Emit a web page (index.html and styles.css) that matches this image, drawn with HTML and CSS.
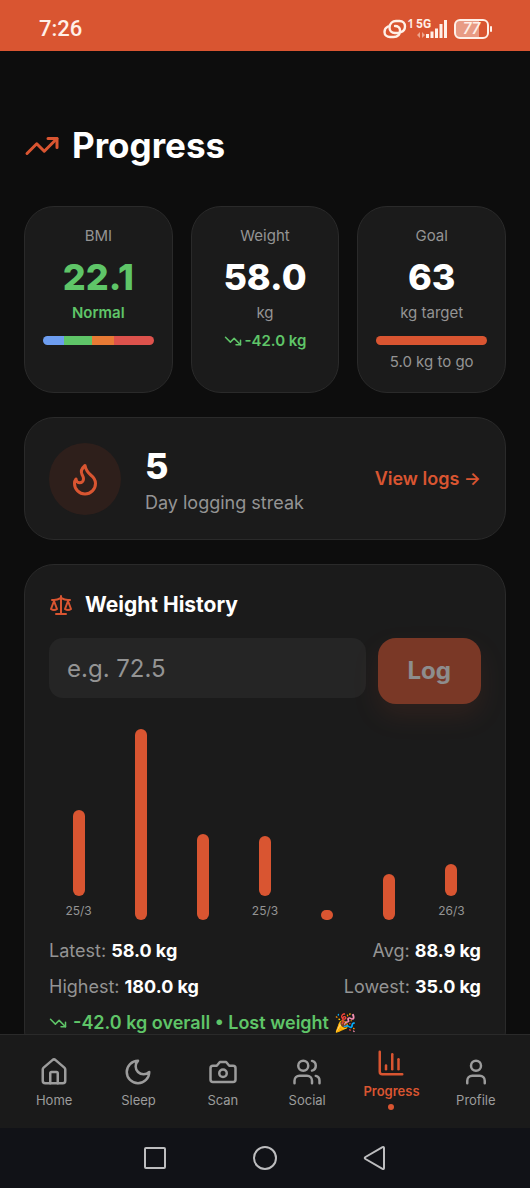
FILE: index.html
```html
<!DOCTYPE html>
<html lang="en">
<head>
<meta charset="utf-8">
<meta name="viewport" content="width=device-width, initial-scale=1">
<title>Progress</title>
<link rel="stylesheet" href="styles.css">
</head>
<body>
<div class="app">
  <header class="status">
    <time class="clock">7:26</time>
    <div class="status-icons">
      <svg class="status-link" viewBox="0 0 24 22" fill="none" stroke="#fff0e8" stroke-width="2.400" stroke-linecap="round">
        <path d="M15.500 15H12C8.500 15 6.500 12.500 6.500 9.500C6.500 5.500 9.500 3 13 3h3.500C20 3 22 5.500 22 8.200c0 3-1.500 5-4 5.800"/>
        <path d="M5 8.500C2.800 9.500 1.500 11.500 1.500 14c0 3 2.500 5 5.500 5h3.500c4 0 6.500-2.500 6.500-6.500C17 9.500 15 8 12 8"/>
      </svg>
      <span class="status-one">1</span>
      <span class="signal">
        <span class="signal-label">5G</span>
        <svg class="signal-bars" viewBox="0 0 32 20">
          <path d="M4 13l-3 3 3 3zM6 13l3 3-3 3z" fill="#eda48c"/>
          <path d="M10 15h3v4h-3zM14.500 12.500h3v6.500h-3zM19 9.500h3v9.500h-3zM23.500 5h3v14h-3zM28 1h3v18h-3z" fill="#fff0e8"/>
        </svg>
      </span>
      <span class="battery"><span class="battery-level">77</span></span>
    </div>
  </header>

  <main class="page">
    <div class="heading">
      <svg class="icon icon-xl" viewBox="0 0 24 24"><path d="M22 7 13.500 15.500 8.500 10.500 2 17"/><path d="M16 7h6v6"/></svg>
      <h1>Progress</h1>
    </div>

    <section class="tiles">
      <article class="card tile">
        <p class="muted">BMI</p>
        <p class="figure good">22.1</p>
        <p class="good strong">Normal</p>
        <div class="meter"><i class="under"></i><i class="normal"></i><i class="over"></i><i class="obese"></i></div>
      </article>
      <article class="card tile">
        <p class="muted">Weight</p>
        <p class="figure">58.0</p>
        <p class="muted">kg</p>
        <p class="good strong change"><svg class="icon icon-sm" viewBox="0 0 24 24"><path d="M22 17 13.500 8.500 8.500 13.500 2 7"/><path d="M16 17h6v-6"/></svg>-42.0 kg</p>
      </article>
      <article class="card tile">
        <p class="muted">Goal</p>
        <p class="figure">63</p>
        <p class="muted">kg target</p>
        <div class="meter"><i class="goal"></i></div>
        <p class="muted to-go">5.0 kg to go</p>
      </article>
    </section>

    <section class="card streak">
      <div class="flame"><svg class="icon icon-xl" viewBox="0 0 24 24"><path d="M8.500 14.500A2.500 2.500 0 0 0 11 12c0-1.380-.5-2-1-3-1.072-2.143-.224-4.054 2-6 .5 2.500 2 4.900 4 6.500 2 1.600 3 3.500 3 5.500a7 7 0 1 1-14 0c0-1.153.433-2.294 1-3a2.500 2.500 0 0 0 2.500 2.500z"/></svg></div>
      <div class="streak-text">
        <p class="figure">5</p>
        <p class="muted">Day logging streak</p>
      </div>
      <a class="logs" href="#logs">View logs →</a>
    </section>

    <section class="card history">
      <h2><svg class="icon icon-md" viewBox="0 0 24 24"><path d="m16 16 3-8 3 8c-.870.650-1.920 1-3 1s-2.130-.350-3-1Z"/><path d="m2 16 3-8 3 8c-.870.650-1.920 1-3 1s-2.130-.350-3-1Z"/><path d="M7 21h10"/><path d="M12 3v18"/><path d="M3 7h2c2 0 5-1 7-2 2 1 5 2 7 2h2"/></svg>Weight History</h2>
      <form class="entry">
        <input type="text" inputmode="decimal" placeholder="e.g. 72.5" aria-label="Weight in kg">
        <button type="submit" disabled>Log</button>
      </form>
      <div class="chart">
        <div class="column"><i class="bar" style="height:86px"></i><span>25/3</span></div>
        <div class="column"><i class="bar" style="height:191px"></i></div>
        <div class="column"><i class="bar" style="height:86px"></i></div>
        <div class="column"><i class="bar" style="height:60px"></i><span>25/3</span></div>
        <div class="column"><i class="bar" style="height:10px"></i></div>
        <div class="column"><i class="bar" style="height:46px"></i></div>
        <div class="column"><i class="bar" style="height:32px"></i><span>26/3</span></div>
      </div>
      <div class="summary">
        <p>Latest: <b>58.0 kg</b></p><p>Avg: <b>88.9 kg</b></p>
        <p>Highest: <b>180.0 kg</b></p><p>Lowest: <b>35.0 kg</b></p>
      </div>
      <p class="overall"><svg class="icon icon-sm" viewBox="0 0 24 24"><path d="M22 17 13.500 8.500 8.500 13.500 2 7"/><path d="M16 17h6v-6"/></svg>-42.0 kg overall • Lost weight 🎉</p>
    </section>
  </main>

  <nav class="tabs">
    <a href="#home"><svg class="icon icon-lg" viewBox="0 0 24 24"><path d="M15 21v-8a1 1 0 0 0-1-1h-4a1 1 0 0 0-1 1v8"/><path d="M3 10a2 2 0 0 1 .709-1.528l7-5.999a2 2 0 0 1 2.582 0l7 5.999A2 2 0 0 1 21 10v9a2 2 0 0 1-2 2H5a2 2 0 0 1-2-2z"/></svg>Home</a>
    <a href="#sleep"><svg class="icon icon-lg" viewBox="0 0 24 24"><path d="M12 3a6 6 0 0 0 9 9 9 9 0 1 1-9-9Z"/></svg>Sleep</a>
    <a href="#scan"><svg class="icon icon-lg" viewBox="0 0 24 24"><path d="M14.500 4h-5L7 7H4a2 2 0 0 0-2 2v9a2 2 0 0 0 2 2h16a2 2 0 0 0 2-2V9a2 2 0 0 0-2-2h-3l-2.500-3z"/><circle cx="12" cy="13" r="3"/></svg>Scan</a>
    <a href="#social"><svg class="icon icon-lg" viewBox="0 0 24 24"><path d="M16 21v-2a4 4 0 0 0-4-4H6a4 4 0 0 0-4 4v2"/><circle cx="9" cy="7" r="4"/><path d="M22 21v-2a4 4 0 0 0-3-3.870"/><path d="M16 3.130a4 4 0 0 1 0 7.750"/></svg>Social</a>
    <a href="#progress" class="active" aria-current="page"><svg class="icon icon-lg" viewBox="0 0 24 24"><path d="M3 3v16a2 2 0 0 0 2 2h16"/><path d="M18 17V9"/><path d="M13 17V5"/><path d="M8 17v-3"/></svg>Progress<i class="dot"></i></a>
    <a href="#profile"><svg class="icon icon-lg" viewBox="0 0 24 24"><path d="M19 21v-2a4 4 0 0 0-4-4H9a4 4 0 0 0-4 4v2"/><circle cx="12" cy="7" r="4"/></svg>Profile</a>
  </nav>

  <div class="system">
    <button type="button" aria-label="Recent apps"><svg viewBox="0 0 26 26"><rect x="3" y="3" width="20" height="20" rx="1"/></svg></button>
    <button type="button" aria-label="Home screen"><svg viewBox="0 0 26 26"><circle cx="13" cy="13" r="11"/></svg></button>
    <button type="button" aria-label="Back"><svg viewBox="0 0 26 26"><path d="M22 3v20q0 1.500-1.500.8L3.500 14q-1.500-1 0-2L20.500 2.200Q22 1.500 22 3z"/></svg></button>
  </div>
</div>
</body>
</html>
```
FILE: styles.css
```css
:root {
  --bg: #0d0d0d;
  --card: #1b1b1b;
  --line: #2a2a2a;
  --muted: #949494;
  --accent: #d95531;
  --good: #5fc568;
}

* { box-sizing: border-box; margin: 0; }

body {
  background: var(--bg);
  color: #fff;
  font: 15px/24px Inter, "Noto Sans", sans-serif;
}

a { text-decoration: none; }

.app {
  display: flex;
  flex-direction: column;
  height: 100vh;
}

/* Status bar */
.status {
  display: flex;
  align-items: center;
  justify-content: space-between;
  height: 51px;
  padding: 7px 38px 0 39px;
  background: var(--accent);
  color: #fff0e8;
}
.clock { font: 500 22px/24px Roboto, sans-serif; }
.status-icons { display: flex; align-items: center; }
.status-link { width: 24px; height: 22px; }
.status-one { font: 600 12px/12px "Noto Sans", sans-serif; align-self: flex-start; }
.signal { position: relative; display: flex; margin-left: 2px; }
.signal-bars { width: 32px; height: 20px; }
.signal-label {
  position: absolute;
  top: -1px;
  left: 0;
  font: 700 12px/12px Roboto, sans-serif;
}
.battery { display: flex; align-items: center; margin-left: 6px; }
.battery-level {
  width: 35px;
  border: 2px solid #fff0e8;
  border-radius: 6px;
  background: linear-gradient(90deg, #e89b84 74%, transparent 74%);
  font: italic 500 16px/16px Roboto, sans-serif;
  text-align: center;
}
.battery::after {
  content: "";
  width: 2px;
  height: 6px;
  margin-left: 1px;
  border-radius: 1px;
  background: #fff0e8;
}

/* Icons */
.icon {
  flex: none;
  fill: none;
  stroke: currentColor;
  stroke-width: 2;
  stroke-linecap: round;
  stroke-linejoin: round;
}
.icon-sm { width: 18px; height: 18px; }
.icon-md { width: 24px; height: 24px; }
.icon-lg { width: 30px; height: 30px; }
.icon-xl { width: 36px; height: 36px; }

/* Page */
.page {
  flex: 1;
  min-height: 0;
  overflow: hidden;
  padding: 72px 24px 0;
}
.heading {
  display: flex;
  align-items: center;
  gap: 12px;
  margin-bottom: 38px;
  color: var(--accent);
}
h1 { color: #fff; font-size: 35px; line-height: 45px; font-weight: 700; }

.card {
  border: 1px solid var(--line);
  border-radius: 30px;
  background: var(--card);
}
.muted { color: var(--muted); }
.good { color: var(--good); }
.strong { font-weight: 600; }
.figure { font-size: 36px; line-height: 45px; font-weight: 800; }

.tiles {
  display: grid;
  grid-template-columns: repeat(3, 1fr);
  gap: 18px;
}
.tile { padding: 17px 18px 18px; text-align: center; }
.tile .figure { margin: 7px 0 1px; }
.change {
  display: flex;
  align-items: center;
  justify-content: center;
  gap: 3px;
  margin-top: 4px;
}
.meter {
  display: flex;
  height: 9px;
  margin-top: 11px;
  border-radius: 5px;
  overflow: hidden;
}
.under { flex: 19; background: #6d9df0; }
.normal { flex: 25; background: var(--good); }
.over { flex: 20; background: #e87a35; }
.obese { flex: 36; background: #dd524c; }
.goal { flex: 1; background: var(--accent); }
.to-go { margin-top: 5px; }

.streak {
  display: flex;
  align-items: center;
  gap: 24px;
  margin-top: 24px;
  padding: 24px;
  font-size: 18px;
  line-height: 25px;
}
.streak .figure { line-height: 48px; }
.flame {
  display: grid;
  place-items: center;
  width: 72px;
  height: 72px;
  border-radius: 50%;
  background: #2e1f1b;
  color: var(--accent);
}
.logs { margin-left: auto; color: var(--accent); font-weight: 600; }

.history { margin-top: 24px; padding: 24px; }
h2 {
  display: flex;
  align-items: center;
  gap: 12px;
  font-size: 21px;
  line-height: 31px;
  font-weight: 700;
}
h2 .icon { color: var(--accent); }
.entry { display: flex; align-items: flex-start; gap: 12px; margin-top: 18px; }
.entry input {
  flex: 1;
  min-width: 0;
  height: 60px;
  padding: 0 18px;
  border: 0;
  border-radius: 14px;
  background: #252525;
  color: #fff;
  font: 24px/30px Inter, sans-serif;
}
.entry input::placeholder { color: #949494; opacity: 1; }
.entry button {
  height: 66px;
  padding: 0 30px;
  border: 0;
  border-radius: 18px;
  background: var(--accent);
  box-shadow: 0 12px 24px rgba(217, 85, 49, 0.2);
  color: #fff;
  font: 700 24px/30px Inter, sans-serif;
  opacity: 0.5;
}

.chart {
  display: grid;
  grid-template-columns: repeat(7, 1fr);
  gap: 3px;
  height: 192px;
  margin-top: 24px;
}
.column {
  display: flex;
  flex-direction: column;
  align-items: center;
  justify-content: flex-end;
  gap: 6px;
  color: var(--muted);
  font-size: 12px;
  line-height: 18px;
}
.bar { flex: none; width: 12px; border-radius: 6px; background: var(--accent); }

.summary {
  display: grid;
  grid-template-columns: auto auto;
  justify-content: space-between;
  row-gap: 9px;
  margin-top: 17px;
  color: var(--muted);
  font-size: 18px;
  line-height: 27px;
}
.summary p:nth-child(even) { text-align: right; }
.summary b { color: #fff; font-weight: 700; }
.overall {
  display: flex;
  align-items: center;
  gap: 6px;
  margin-top: 9px;
  color: var(--good);
  font-size: 18px;
  line-height: 27px;
  font-weight: 600;
}

/* App tabs */
.tabs {
  display: grid;
  grid-template-columns: repeat(6, 1fr);
  align-items: end;
  height: 94px;
  padding: 0 12px 18px;
  border-top: 1px solid var(--line);
  background: #1a1a1a;
}
.tabs a {
  display: flex;
  flex-direction: column;
  align-items: center;
  gap: 3px;
  color: #9c9c9c;
  font-size: 13px;
  line-height: 20px;
}
.tabs .active { color: var(--accent); font-weight: 600; }
.dot { width: 6px; height: 6px; border-radius: 50%; background: currentColor; }

/* System navigation */
.system {
  display: flex;
  align-items: center;
  justify-content: center;
  gap: 84px;
  height: 60px;
  background: #111217;
}
.system button { display: flex; padding: 0; border: 0; background: none; }
.system svg { width: 26px; height: 26px; fill: none; stroke: #bdbdbf; stroke-width: 2; }
```
